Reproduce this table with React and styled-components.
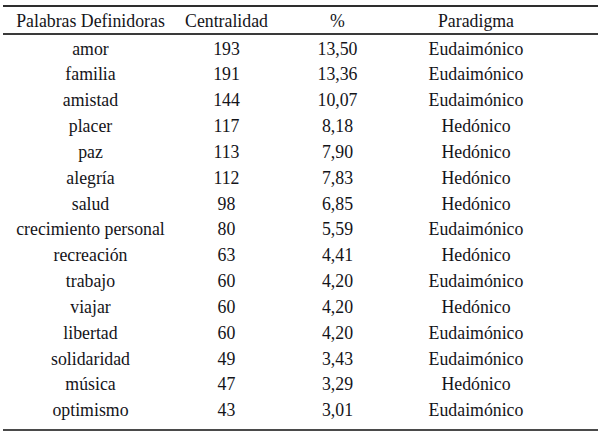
import styled, { createGlobalStyle } from "styled-components";

const GlobalStyle = createGlobalStyle`
  html, body {
    margin: 0;
    padding: 0;
    background: #ffffff;
  }
`;

const Page = styled.div`
  width: 600px;
  height: 439px;
  overflow: hidden;
  background: #fff;
  padding: 5px 2px 0 3px;
  box-sizing: border-box;
  font-family: "Liberation Serif", "Times New Roman", serif;
  font-size: 17.8px;
  color: #141419;
`;

const Table = styled.div`
  border-top: 2px solid #2e2e2e;
  border-bottom: 2px solid #4a4a4a;
  padding-bottom: 6px;
`;

const Row = styled.div`
  display: grid;
  grid-template-columns: 175px 97px 125px 152px 1fr;
  align-items: center;
  box-sizing: border-box;
  height: ${(p) => (p.$head ? "28px" : "25.85px")};
  padding-top: ${(p) => (p.$head ? "4px" : "3px")};
  border-bottom: ${(p) => (p.$head ? "2px solid #3a3a3a" : "none")};
`;

const Cell = styled.div`
  text-align: center;
  white-space: nowrap;
  line-height: 1;
`;

const rows = [
  ["amor", "193", "13,50", "Eudaimónico"],
  ["familia", "191", "13,36", "Eudaimónico"],
  ["amistad", "144", "10,07", "Eudaimónico"],
  ["placer", "117", "8,18", "Hedónico"],
  ["paz", "113", "7,90", "Hedónico"],
  ["alegría", "112", "7,83", "Hedónico"],
  ["salud", "98", "6,85", "Hedónico"],
  ["crecimiento personal", "80", "5,59", "Eudaimónico"],
  ["recreación", "63", "4,41", "Hedónico"],
  ["trabajo", "60", "4,20", "Eudaimónico"],
  ["viajar", "60", "4,20", "Hedónico"],
  ["libertad", "60", "4,20", "Eudaimónico"],
  ["solidaridad", "49", "3,43", "Eudaimónico"],
  ["música", "47", "3,29", "Hedónico"],
  ["optimismo", "43", "3,01", "Eudaimónico"],
];

export default function App() {
  return (
    <>
      <GlobalStyle />
      <Page>
        <Table>
          <Row $head>
            <Cell>Palabras Definidoras</Cell>
            <Cell>Centralidad</Cell>
            <Cell>%</Cell>
            <Cell>Paradigma</Cell>
          </Row>
          {rows.map((r) => (
            <Row key={r[0]}>
              {r.map((c, i) => (
                <Cell key={i}>{c}</Cell>
              ))}
            </Row>
          ))}
        </Table>
      </Page>
    </>
  );
}
